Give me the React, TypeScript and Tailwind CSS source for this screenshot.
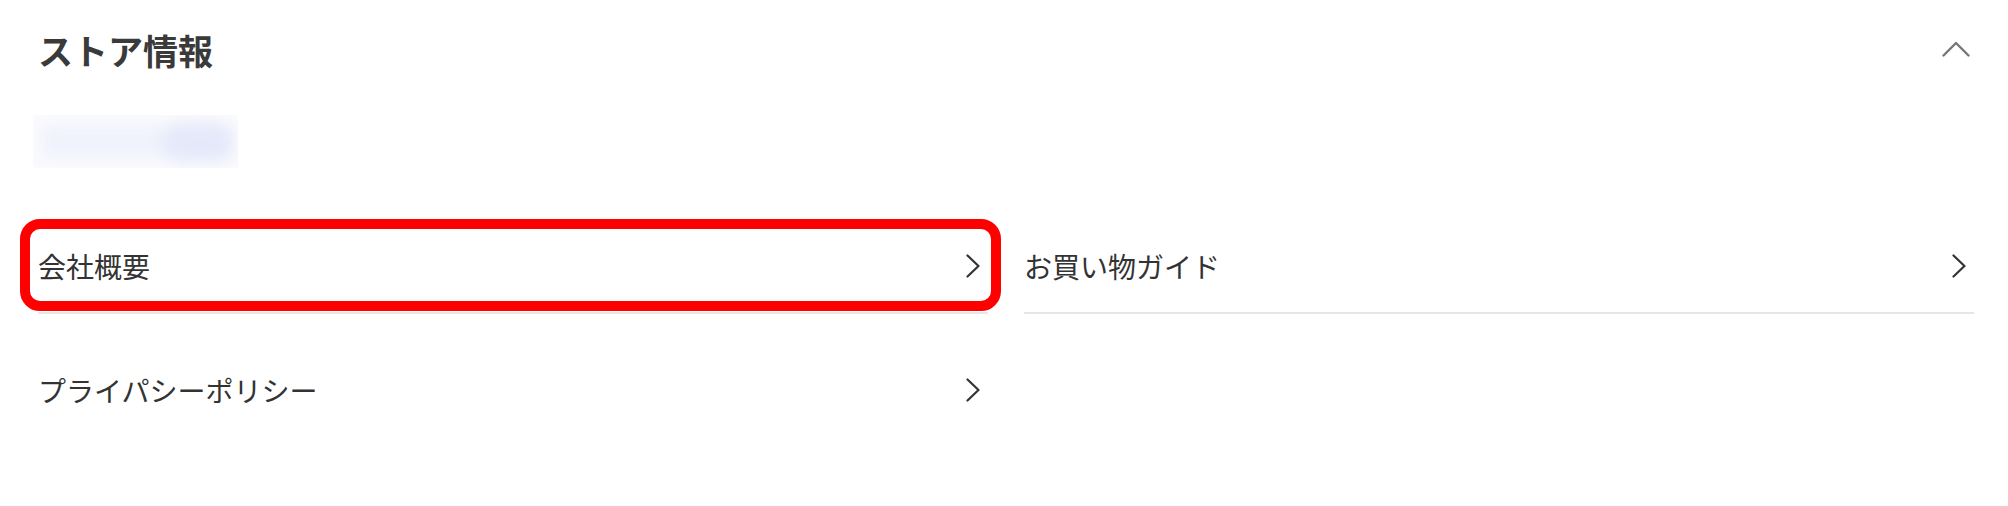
import { ReactNode } from "react";

const font = { fontFamily: '"Noto Sans CJK JP", "Noto Sans", sans-serif' };

function ChevronRight() {
  return (
    <svg width="14" height="24" viewBox="0 0 14 24" fill="none" className="mr-[8px] shrink-0">
      <path d="M1.5 1.5 L12.5 12 L1.5 22.5" stroke="#333333" strokeWidth="2.2" strokeLinecap="round" strokeLinejoin="round" />
    </svg>
  );
}

function ChevronUp() {
  return (
    <svg width="28" height="16" viewBox="0 0 28 16" fill="none">
      <path d="M1.5 14.5 L14 2 L26.5 14.5" stroke="#777777" strokeWidth="2.4" strokeLinecap="round" strokeLinejoin="round" />
    </svg>
  );
}

function Row({ label, border, highlight }: { label: string; border?: boolean; highlight?: boolean }): ReactNode {
  return (
    <div className={`relative flex items-center justify-between h-[94px] ${border ? "border-b-2 border-[#e6e6e6]" : ""}`}>
      <span className="text-[28px] text-[#333333] leading-none">{label}</span>
      <ChevronRight />
      {highlight && (
        <div className="absolute left-[-18px] right-[-13px] top-[-1px] bottom-[1px] border-[10px] border-[#ff0000] rounded-[20px] pointer-events-none" />
      )}
    </div>
  );
}

export default function App() {
  return (
    <div className="w-[2008px] h-[506px] bg-white overflow-hidden" style={font}>
      {/* Header */}
      <div className="flex items-center justify-between h-[98px] pl-[38px] pr-[38px]">
        <h2 className="text-[35px] font-bold text-[#3a3a3a] leading-none">ストア情報</h2>
        <ChevronUp />
      </div>

      {/* blurred store name */}
      <div className="relative ml-[33px] mt-[17px] w-[205px] h-[53px] overflow-hidden bg-[#fbfbfe]">
        <div className="absolute left-[8px] right-[8px] top-[10px] bottom-[10px] bg-[#f0f2fc] blur-[7px]" />
        <div className="absolute left-[130px] w-[70px] top-[10px] bottom-[8px] rounded-full bg-[#e4e8f9] blur-[8px]" />
      </div>

      {/* Links */}
      <div className="grid grid-cols-2 gap-x-[36px] gap-y-[29px] mt-[52px] pl-[38px] pr-[34px]">
        <Row label="会社概要" border highlight />
        <Row label="お買い物ガイド" border />
        <Row label="プライパシーポリシー" />
      </div>
    </div>
  );
}
